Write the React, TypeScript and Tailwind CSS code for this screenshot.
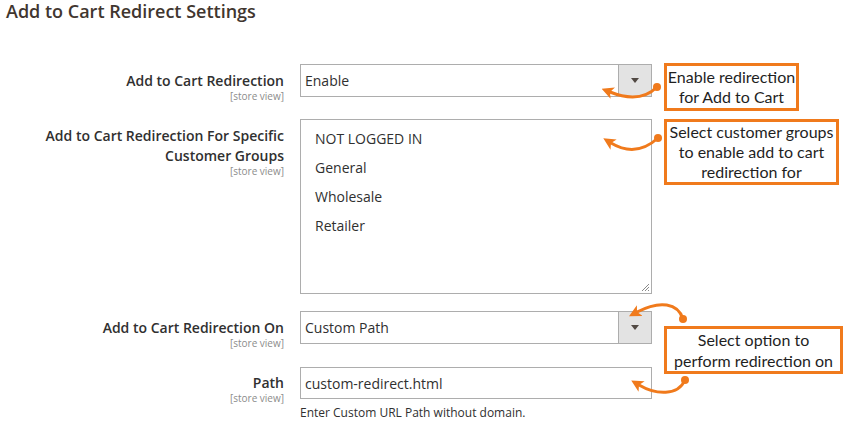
import React from "react";

const ORANGE = "#f07a1c";

function StoreView() {
  return <div className="text-[10px] leading-[10px] text-[#8c8c8c]">[store view]</div>;
}

function SelectBox({ value }: { value: string }) {
  return (
    <div className="flex h-[33px] w-[352px] border border-[#adadad] bg-white">
      <div className="flex flex-1 items-center pl-[4px] text-[14px] text-[#303030]">{value}</div>
      <div className="flex w-[33px] items-center justify-center border-l border-[#adadad] bg-[#e3e3e3]">
        <div className="h-0 w-0 border-x-[4px] border-t-[5px] border-x-transparent border-t-[#514943]" />
      </div>
    </div>
  );
}

export default function App() {
  const groups = ["NOT LOGGED IN", "General", "Wholesale", "Retailer"];

  return (
    <div className="relative h-[423px] w-[848px] overflow-hidden bg-white font-['Open_Sans',sans-serif] text-[#303030]">
      <h1 className="pl-[6px] text-[18px] font-semibold leading-[22px] text-[#41362f]">
        Add to Cart Redirect Settings
      </h1>

      {/* row 1 */}
      <div className="mt-[42px] flex items-start">
        <div className="w-[284px] pt-[7px] text-right">
          <div className="text-[14px] font-semibold leading-[20px]">Add to Cart Redirection</div>
          <StoreView />
        </div>
        <div className="ml-[16px]">
          <SelectBox value="Enable" />
        </div>
      </div>

      {/* row 2 */}
      <div className="mt-[18px] flex items-start">
        <div className="w-[284px] pt-[7px] text-right">
          <div className="text-[14px] font-semibold leading-[20px]">
            Add to Cart Redirection For Specific
            <br />
            Customer Groups
          </div>
          <StoreView />
        </div>
        <div className="relative ml-[16px] h-[175px] w-[352px] border border-[#adadad] bg-white pl-[14px] pt-[4px]">
          {groups.map((g) => (
            <div key={g} className="flex h-[29px] items-center text-[14px] text-[#303030]">
              {g}
            </div>
          ))}
          <svg className="absolute bottom-[1px] right-[1px]" width="9" height="9" viewBox="0 0 9 9">
            <path d="M1 8 L8 1 M4 8 L8 4 M7 8 L8 7" stroke="#8a8a8a" strokeWidth="1" />
          </svg>
        </div>
      </div>

      {/* row 3 */}
      <div className="mt-[17px] flex items-start">
        <div className="w-[284px] pt-[7px] text-right">
          <div className="text-[14px] font-semibold leading-[20px]">Add to Cart Redirection On</div>
          <StoreView />
        </div>
        <div className="ml-[16px]">
          <SelectBox value="Custom Path" />
        </div>
      </div>

      {/* row 4 */}
      <div className="mt-[19px] flex items-start">
        <div className="w-[284px] pt-[6px] text-right">
          <div className="text-[14px] font-semibold leading-[20px]">Path</div>
          <StoreView />
        </div>
        <div className="ml-[16px]">
          <div className="flex h-[32px] w-[352px] items-center border border-[#adadad] bg-white pl-[4px] text-[14px]">
            custom-redirect.html
          </div>
          <div className="mt-[6px] text-[12px] leading-[16px]">Enter Custom URL Path without domain.</div>
        </div>
      </div>

      {/* annotations */}
      <div className="absolute left-[664px] top-[63px] flex h-[48px] w-[135px] flex-col items-center justify-center border-[3px] border-[#f07a1c] bg-white text-center font-['Lato',sans-serif] text-[16px] leading-[20px] text-[#1f1f1f]">
        <div>Enable redirection</div>
        <div>for Add to Cart</div>
      </div>
      <div className="absolute left-[664px] top-[119px] flex h-[66px] w-[175px] flex-col items-center justify-center border-[3px] border-[#f07a1c] bg-white text-center font-['Lato',sans-serif] text-[16px] leading-[20px] text-[#1f1f1f]">
        <div>Select customer groups</div>
        <div>to enable add to cart</div>
        <div>redirection for</div>
      </div>
      <div className="absolute left-[664px] top-[326px] flex h-[48px] w-[179px] flex-col items-center justify-center border-[3px] border-[#f07a1c] bg-white text-center font-['Lato',sans-serif] text-[16px] leading-[21px] text-[#1f1f1f]">
        <div>Select option to</div>
        <div>perform redirection on</div>
      </div>

      <svg className="pointer-events-none absolute left-0 top-0" width="848" height="423" viewBox="0 0 848 423">
        <defs>
          <marker id="head" markerUnits="userSpaceOnUse" markerWidth="12" markerHeight="12" refX="3" refY="6" orient="auto">
            <path d="M0,0 L12,6 L0,12 L3,6 z" fill={ORANGE} />
          </marker>
        </defs>
        <g fill="none" stroke={ORANGE} strokeWidth="3" strokeLinecap="round">
          <path d="M657,87 Q640,104 610,92" markerEnd="url(#head)" />
          <path d="M658,138 Q636,158 611,143" markerEnd="url(#head)" />
          <path d="M683,319 C678,303 660,300 637,312" markerEnd="url(#head)" />
          <path d="M685,380 C678,396 656,395 639,385" markerEnd="url(#head)" />
        </g>
        <g fill={ORANGE}>
          <circle cx="657" cy="87" r="4" />
          <circle cx="658" cy="138" r="4" />
          <circle cx="683" cy="319" r="4" />
          <circle cx="685" cy="380" r="4" />
        </g>
      </svg>
    </div>
  );
}
